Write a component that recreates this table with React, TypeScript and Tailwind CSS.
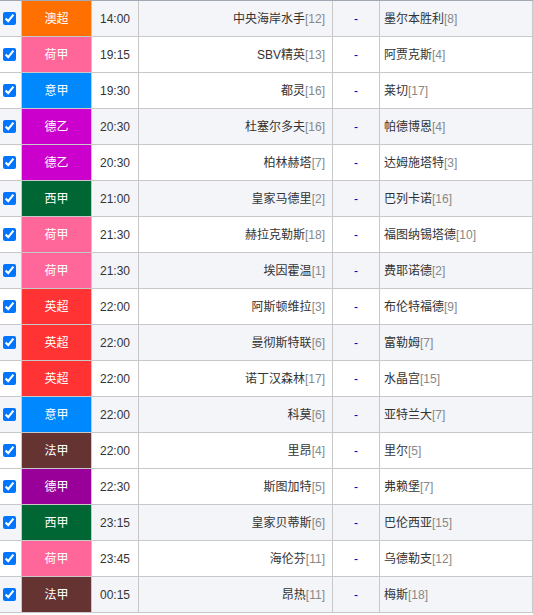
const LEAGUE_BG: Record<string, string> = {
  澳超: "bg-[#ff7000]",
  荷甲: "bg-[#ff6699]",
  意甲: "bg-[#0088ff]",
  德乙: "bg-[#cc00cc]",
  西甲: "bg-[#006633]",
  英超: "bg-[#ff3333]",
  法甲: "bg-[#663333]",
  德甲: "bg-[#990099]",
}

const matches = [
  { league: "澳超", time: "14:00", home: "中央海岸水手", hr: 12, away: "墨尔本胜利", ar: 8, alt: true },
  { league: "荷甲", time: "19:15", home: "SBV精英", hr: 13, away: "阿贾克斯", ar: 4, alt: false },
  { league: "意甲", time: "19:30", home: "都灵", hr: 16, away: "莱切", ar: 17, alt: false },
  { league: "德乙", time: "20:30", home: "杜塞尔多夫", hr: 16, away: "帕德博恩", ar: 4, alt: true },
  { league: "德乙", time: "20:30", home: "柏林赫塔", hr: 7, away: "达姆施塔特", ar: 3, alt: false },
  { league: "西甲", time: "21:00", home: "皇家马德里", hr: 2, away: "巴列卡诺", ar: 16, alt: true },
  { league: "荷甲", time: "21:30", home: "赫拉克勒斯", hr: 18, away: "福图纳锡塔德", ar: 10, alt: false },
  { league: "荷甲", time: "21:30", home: "埃因霍温", hr: 1, away: "费耶诺德", ar: 2, alt: true },
  { league: "英超", time: "22:00", home: "阿斯顿维拉", hr: 3, away: "布伦特福德", ar: 9, alt: false },
  { league: "英超", time: "22:00", home: "曼彻斯特联", hr: 6, away: "富勒姆", ar: 7, alt: true },
  { league: "英超", time: "22:00", home: "诺丁汉森林", hr: 17, away: "水晶宫", ar: 15, alt: false },
  { league: "意甲", time: "22:00", home: "科莫", hr: 6, away: "亚特兰大", ar: 7, alt: true },
  { league: "法甲", time: "22:00", home: "里昂", hr: 4, away: "里尔", ar: 5, alt: false },
  { league: "德甲", time: "22:30", home: "斯图加特", hr: 5, away: "弗赖堡", ar: 7, alt: false },
  { league: "西甲", time: "23:15", home: "皇家贝蒂斯", hr: 6, away: "巴伦西亚", ar: 15, alt: true },
  { league: "荷甲", time: "23:45", home: "海伦芬", hr: 11, away: "乌德勒支", ar: 12, alt: false },
  { league: "法甲", time: "00:15", home: "昂热", hr: 11, away: "梅斯", ar: 18, alt: true },
]

export default function App() {
  return (
    <div
      className="w-[533px] border-t border-[#a3a9b2] bg-white text-[12px] text-[#333]"
      style={{ fontFamily: '"Liberation Sans", "Noto Sans CJK SC", sans-serif' }}
    >
      {matches.map((m, i) => (
        <div
          key={i}
          className={`grid h-9 grid-cols-[22px_70px_47px_194px_47px_153px] ${m.alt ? "bg-[#f4f5f9]" : "bg-white"}`}
        >
          {/* check */}
          <div className="flex items-center justify-center border-r border-b border-[#c8c8c8] pr-[2px]">
            <input type="checkbox" checked readOnly className="h-[13px] w-[13px] accent-[#0075ff]" />
          </div>
          {/* league */}
          <div
            className={`flex items-center justify-center border-r border-b border-[#c8c8c8] text-white ${LEAGUE_BG[m.league]}`}
          >
            {m.league}
          </div>
          {/* time */}
          <div className="flex items-center justify-center border-r border-b border-[#c8c8c8]">{m.time}</div>
          {/* home */}
          <div className="flex items-center justify-end border-r border-b border-[#c8c8c8] pr-[7px]">
            {m.home}
            <span className="text-[#888]">[{m.hr}]</span>
          </div>
          {/* score */}
          <div className="flex items-center justify-center border-r border-b border-[#c8c8c8] text-[#0000cc]">-</div>
          {/* away */}
          <div className="flex items-center border-r border-b border-[#c8c8c8] pl-[4px]">
            {m.away}
            <span className="text-[#888]">[{m.ar}]</span>
          </div>
        </div>
      ))}
    </div>
  )
}
